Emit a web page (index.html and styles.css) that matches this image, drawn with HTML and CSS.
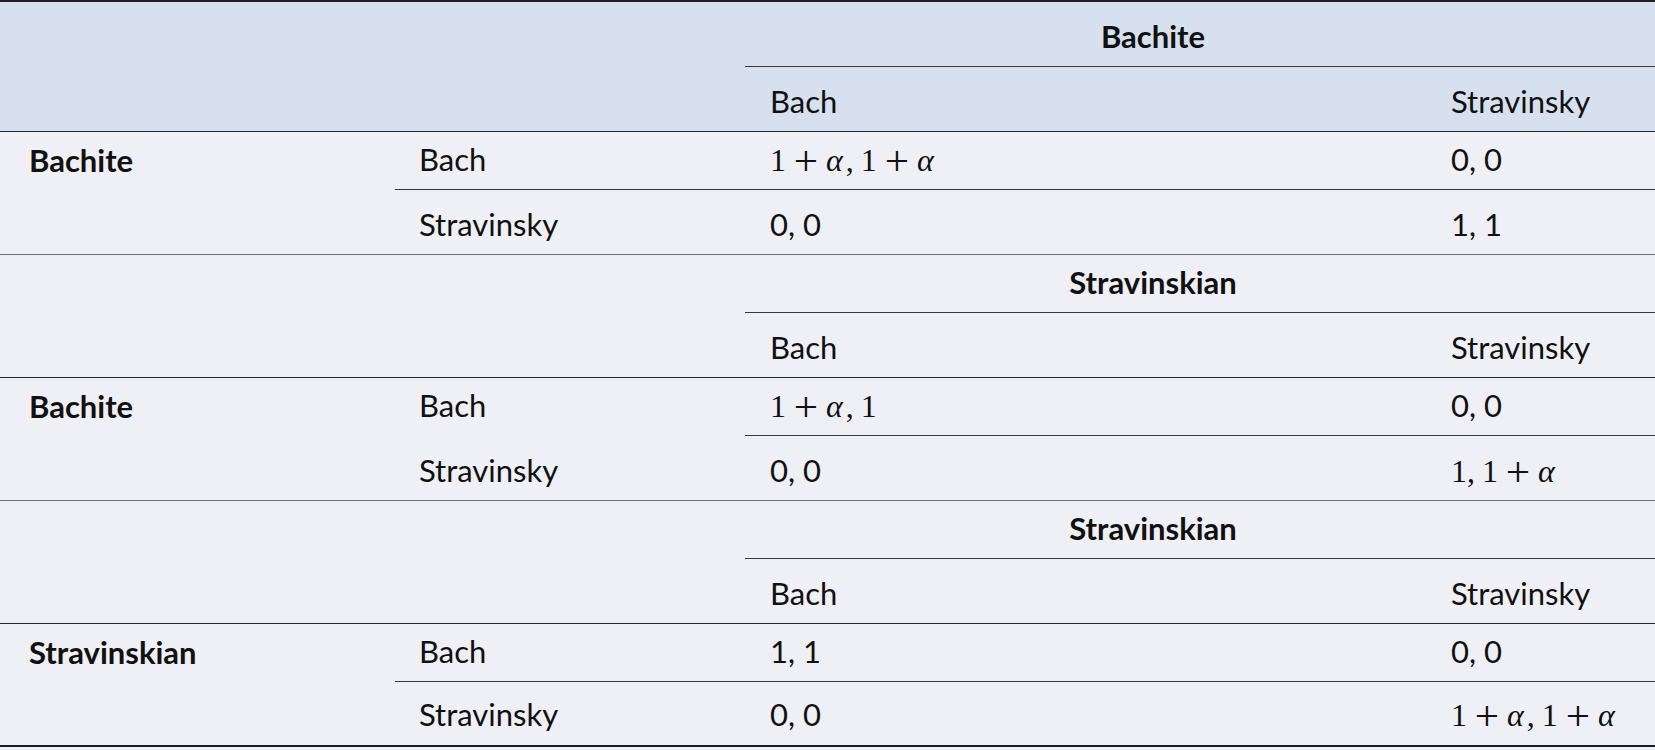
FILE: index.html
```html
<!DOCTYPE html>
<html lang="en">
<head>
<meta charset="utf-8">
<title>Payoff matrices</title>
<link rel="stylesheet" href="styles.css">
</head>
<body>
<table class="payoff">
  <colgroup>
    <col class="c1"><col class="c2"><col class="c3"><col class="c4">
  </colgroup>
  <thead>
    <tr class="row-first">
      <th></th><th></th>
      <th colspan="2" class="group lined">Bachite</th>
    </tr>
    <tr class="row-tall head-sub">
      <th></th><th></th>
      <th class="col3">Bach</th><th class="col4">Stravinsky</th>
    </tr>
  </thead>
  <tbody>
    <tr class="row-short">
      <th rowspan="2" class="player sep">Bachite</th>
      <td class="col2 lined">Bach</td>
      <td class="col3 lined"><span class="math"><span class="mn">1</span><span class="mo">+</span><span class="mi">α</span><span class="mp">,</span><span class="mn">1</span><span class="mo">+</span><span class="mi">α</span></span></td>
      <td class="col4 lined">0, 0</td>
    </tr>
    <tr class="row-tall">
      <td class="col2 sep">Stravinsky</td>
      <td class="col3 sep">0, 0</td>
      <td class="col4 sep">1, 1</td>
    </tr>
  </tbody>
  <tbody>
    <tr class="row-short">
      <td></td><td></td>
      <th colspan="2" class="group lined">Stravinskian</th>
    </tr>
    <tr class="row-tall head-sub">
      <td></td><td></td>
      <td class="col3">Bach</td><td class="col4">Stravinsky</td>
    </tr>
    <tr class="row-short">
      <th rowspan="2" class="player sep">Bachite</th>
      <td class="col2">Bach</td>
      <td class="col3 lined"><span class="math"><span class="mn">1</span><span class="mo">+</span><span class="mi">α</span><span class="mp">,</span><span class="mn">1</span></span></td>
      <td class="col4 lined">0, 0</td>
    </tr>
    <tr class="row-tall">
      <td class="col2 sep">Stravinsky</td>
      <td class="col3 sep">0, 0</td>
      <td class="col4 sep"><span class="math"><span class="mn">1</span><span class="mp">,</span><span class="mn">1</span><span class="mo">+</span><span class="mi">α</span></span></td>
    </tr>
  </tbody>
  <tbody>
    <tr class="row-short">
      <td></td><td></td>
      <th colspan="2" class="group lined">Stravinskian</th>
    </tr>
    <tr class="row-tall head-sub">
      <td></td><td></td>
      <td class="col3">Bach</td><td class="col4">Stravinsky</td>
    </tr>
    <tr class="row-short">
      <th rowspan="2" class="player">Stravinskian</th>
      <td class="col2 lined">Bach</td>
      <td class="col3 lined">1, 1</td>
      <td class="col4 lined">0, 0</td>
    </tr>
    <tr class="row-last">
      <td class="col2">Stravinsky</td>
      <td class="col3">0, 0</td>
      <td class="col4"><span class="math"><span class="mn">1</span><span class="mo">+</span><span class="mi">α</span><span class="mp">,</span><span class="mn">1</span><span class="mo">+</span><span class="mi">α</span></span></td>
    </tr>
  </tbody>
</table>
</body>
</html>
```
FILE: styles.css
```css
html, body {
  margin: 0;
  padding: 0;
  background: #eff0f5;
}

.payoff {
  width: 1655px;
  table-layout: fixed;
  border-collapse: separate;
  border-spacing: 0;
  border-top: 2px solid #1e1e1e;
  border-bottom: 2px solid #1e1e1e;
  background: #eff0f5;
  color: #111;
  font-family: "Lato", "Noto Sans", sans-serif;
  font-size: 31px;
  line-height: 37px;
}

.c1 { width: 395px; }
.c2 { width: 350px; }
.c3 { width: 686px; }
.c4 { width: 224px; }

.payoff th,
.payoff td {
  padding: 0 0 11px 0;
  vertical-align: bottom;
  text-align: left;
  font-weight: normal;
  white-space: nowrap;
  border-bottom: 1px solid transparent;
}

.payoff thead tr {
  background: #d6e0ee;
}

.row-first { height: 65px; }
.row-short { height: 58px; }
.row-tall { height: 65px; }
.row-last { height: 63px; }

.payoff .group {
  font-weight: 700;
  text-align: center;
  padding-left: 25px;
  padding-right: 119px;
}

.payoff .player {
  font-weight: 700;
  vertical-align: top;
  padding: 10px 0 0 29px;
}

.payoff .col2 { padding-left: 24px; }
.payoff .col3 { padding-left: 25px; }
.payoff .col4 { padding-left: 20px; }

.payoff .lined {
  border-bottom: 1px solid #3a3a3a;
}

.payoff .head-sub th,
.payoff .head-sub td {
  border-bottom: 1px solid #2a2a2a;
}

.payoff .sep {
  border-bottom: 1px solid #6e6e6e;
}

.math {
  font-family: "Liberation Serif", "DejaVu Serif", serif;
  font-size: 32px;
  line-height: 1;
}

.mn { font-style: normal; }

.mi {
  font-style: italic;
  padding-right: 3px;
}

.mo {
  display: inline-block;
  margin: 0 11px;
  transform: scale(1.35, 1.35);
}

.mp {
  margin-right: 7px;
}
```
